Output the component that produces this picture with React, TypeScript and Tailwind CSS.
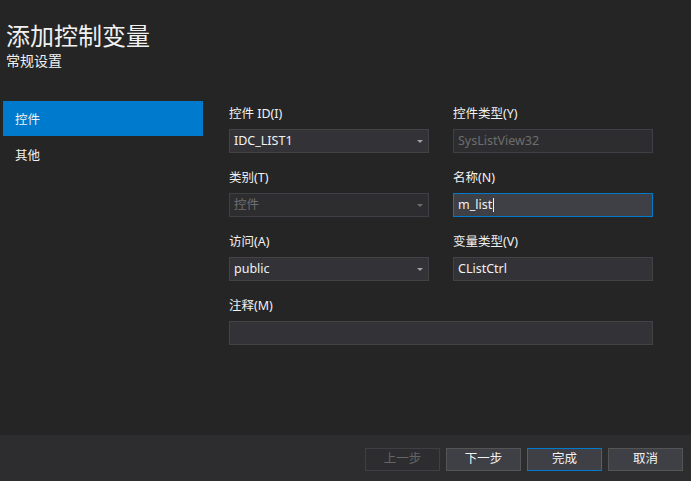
import React from 'react';

const font = { fontFamily: '"Noto Sans", "Noto Sans CJK SC", sans-serif' };

const Arrow = ({ dim }: { dim?: boolean }) => (
  <svg width="6" height="3" viewBox="0 0 6 3" className="shrink-0">
    <path d="M0 0 H6 L3 3 Z" fill={dim ? '#6d6d6d' : '#a0a0a0'} />
  </svg>
);

const Combo = ({ value, disabled }: { value: string; disabled?: boolean }) => (
  <div
    className={`flex h-[24px] items-center justify-between border px-[4px] pr-[5px] text-[12.5px] ${
      disabled ? 'border-[#3f3f46] bg-[#2d2d30] text-[#6d6d6d]' : 'border-[#434346] bg-[#333337] text-[#f1f1f1]'
    }`}
  >
    <span>{value}</span>
    <Arrow dim={disabled} />
  </div>
);

const TextBox = ({ value, disabled, focused }: { value: string; disabled?: boolean; focused?: boolean }) => (
  <div
    className={`flex h-[24px] items-center border px-[4px] text-[12.5px] ${
      disabled
        ? 'border-[#3f3f46] bg-[#2d2d30] text-[#6d6d6d]'
        : focused
        ? 'border-[#007acc] bg-[#3f3f46] text-[#f1f1f1]'
        : 'border-[#434346] bg-[#333337] text-[#f1f1f1]'
    }`}
  >
    <span>{value}</span>
    {focused && <span className="ml-[1px] h-[14px] w-px bg-[#f1f1f1]" />}
  </div>
);

const Field = ({ label, children }: { label: string; children: React.ReactNode }) => (
  <div className="flex flex-col">
    <label className="mb-[6px] h-[18px] text-[12.5px] leading-[18px] text-[#f1f1f1]">{label}</label>
    {children}
  </div>
);

const Button = ({ text, disabled, primary }: { text: string; disabled?: boolean; primary?: boolean }) => (
  <button
    className={`h-[23px] w-[75px] border text-[12.5px] ${
      disabled
        ? 'border-[#3f3f46] bg-[#2d2d30] text-[#656565]'
        : primary
        ? 'border-[#007acc] bg-[#3f3f46] text-[#f1f1f1]'
        : 'border-[#555555] bg-[#3f3f46] text-[#f1f1f1]'
    }`}
  >
    {text}
  </button>
);

export default function App() {
  return (
    <div style={font} className="flex h-[481px] w-[691px] flex-col bg-[#252526] text-[#f1f1f1]">
      <header className="px-[6px] pt-[20px]">
        <h1 className="text-[24px] leading-[32px]">添加控制变量</h1>
        <h2 className="text-[14px] leading-[18px]">常规设置</h2>
      </header>

      <div className="mt-[31px] flex flex-1">
        <nav className="ml-[3px] w-[200px] text-[12.5px]">
          <div className="flex h-[35px] items-center bg-[#007acc] pl-[12px] pt-[3px]">控件</div>
          <div className="flex h-[36px] items-center pl-[12px] pt-[4px]">其他</div>
        </nav>

        <section className="ml-[26px] w-[424px] pt-[4px]">
          <div className="grid grid-cols-[200px_200px] gap-x-[24px] gap-y-[16px]">
            <Field label="控件 ID(I)">
              <Combo value="IDC_LIST1" />
            </Field>
            <Field label="控件类型(Y)">
              <TextBox value="SysListView32" disabled />
            </Field>
            <Field label="类别(T)">
              <Combo value="控件" disabled />
            </Field>
            <Field label="名称(N)">
              <TextBox value="m_list" focused />
            </Field>
            <Field label="访问(A)">
              <Combo value="public" />
            </Field>
            <Field label="变量类型(V)">
              <TextBox value="CListCtrl" />
            </Field>
            <div className="col-span-2">
              <Field label="注释(M)">
                <TextBox value="" />
              </Field>
            </div>
          </div>
        </section>
      </div>

      <footer className="flex h-[46px] items-center justify-end gap-[6px] bg-[#2d2d30] pr-[8px] pt-[2px]">
        <Button text="上一步" disabled />
        <Button text="下一步" />
        <Button text="完成" primary />
        <Button text="取消" />
      </footer>
    </div>
  );
}
